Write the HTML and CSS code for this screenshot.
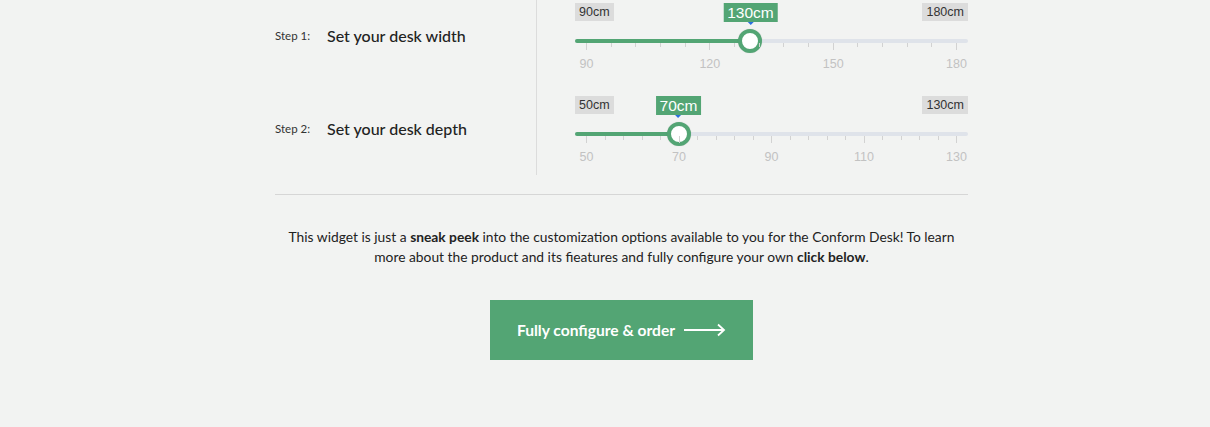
FILE: index.html
```html
<!DOCTYPE html>
<html lang="en">
<head>
<meta charset="utf-8">
<title>Desk configurator</title>
<link rel="stylesheet" href="styles.css">
</head>
<body>
<div class="widget">
  <div class="steps">
    <div class="step">
      <div class="step-label"><span class="step-num">Step 1:</span><span class="step-title">Set your desk width</span></div>
      <div class="step-control">
        <div class="slider">
          <span class="edge edge-min">90cm</span>
          <span class="edge edge-max">180cm</span>
          <div class="track"></div>
          <div class="bar" style="width:175px"></div>
          <div class="handle" style="left:163px"></div>
          <span class="tip" style="left:175.5px">130cm</span>
          <div class="ticks">
            <i class="big"></i><i></i><i></i><i></i><i></i>
            <i class="big"></i><i></i><i></i><i></i><i></i>
            <i class="big"></i><i></i><i></i><i></i><i></i>
            <i class="big"></i>
          </div>
          <div class="nums"><span>90</span><span>120</span><span>150</span><span>180</span></div>
        </div>
      </div>
    </div>
    <div class="step step-last">
      <div class="step-label"><span class="step-num">Step 2:</span><span class="step-title">Set your desk depth</span></div>
      <div class="step-control">
        <div class="slider">
          <span class="edge edge-min">50cm</span>
          <span class="edge edge-max">130cm</span>
          <div class="track"></div>
          <div class="bar" style="width:103px"></div>
          <div class="handle" style="left:91.5px"></div>
          <span class="tip" style="left:103.5px">70cm</span>
          <div class="ticks">
            <i class="big"></i><i></i><i></i><i></i><i></i>
            <i class="big"></i><i></i><i></i><i></i><i></i>
            <i class="big"></i><i></i><i></i><i></i><i></i>
            <i class="big"></i><i></i><i></i><i></i><i></i>
            <i class="big"></i>
          </div>
          <div class="nums"><span>50</span><span>70</span><span>90</span><span>110</span><span>130</span></div>
        </div>
      </div>
    </div>
  </div>
  <hr class="divider">
  <p class="note">This widget is just a <b>sneak peek</b> into the customization options available to you for the Conform Desk! To learn more about the product and its fieatures and fully configure your own <b>click below</b>.</p>
  <div class="cta-wrap">
    <a class="cta" href="#"><span>Fully configure &amp; order</span>
      <svg class="arrow" width="42" height="14" viewBox="0 0 42 14" aria-hidden="true"><path d="M0 7H40M34 1.5L40 7L34 12.5" fill="none" stroke="#fff" stroke-width="1.8"/></svg>
    </a>
  </div>
</div>
</body>
</html>
```
FILE: styles.css
```css
html, body {
  margin: 0;
  padding: 0;
}
body {
  background: #f2f3f2;
  font-family: Lato, "Open Sans", sans-serif;
  color: #222;
}
.widget {
  margin-left: 275px;
  width: 693px;
}
.steps {
  display: flex;
  flex-direction: column;
}
.step {
  display: flex;
  height: 93px;
}
.step-last {
  height: 82px;
}
.step-label {
  width: 261px;
  margin-top: 25px;
  display: flex;
  align-items: center;
  height: 20px;
}
.step-num {
  font-size: 11.5px;
  color: #333;
  width: 52px;
}
.step-title {
  font-size: 16px;
  font-weight: 500;
  color: #222;
}
.step-control {
  flex: 1;
  border-left: 1px solid #dcdcdc;
  padding-left: 38px;
}
.slider {
  position: relative;
  width: 393px;
  height: 82px;
  font-family: "Liberation Sans", Arial, sans-serif;
}
.edge {
  position: absolute;
  top: 3px;
  height: 18px;
  line-height: 18px;
  padding: 0 4px;
  font-size: 12.5px;
  color: #333;
  background: #dcdcdc;
}
.edge-min { left: 0; }
.edge-max { right: 0; }
.track {
  position: absolute;
  top: 39px;
  left: 0;
  right: 0;
  height: 4px;
  border-radius: 2px;
  background: #dfe3ea;
}
.bar {
  position: absolute;
  top: 39px;
  left: 0;
  height: 4px;
  border-radius: 2px 0 0 2px;
  background: #53a574;
}
.handle {
  position: absolute;
  top: 29px;
  width: 24px;
  height: 24px;
  box-sizing: border-box;
  border: 4px solid #53a574;
  border-radius: 50%;
  background: #fff;
  box-shadow: 0 0 1px rgba(0,0,0,0.2);
}
.tip {
  position: absolute;
  top: 3px;
  transform: translateX(-50%);
  height: 19px;
  line-height: 19px;
  padding: 0 4px;
  font-size: 15.5px;
  color: #fff;
  background: #53a574;
  white-space: nowrap;
}
.tip::after {
  content: "";
  position: absolute;
  left: 50%;
  bottom: -3px;
  margin-left: -3px;
  border-left: 3px solid transparent;
  border-right: 3px solid transparent;
  border-top: 3px solid #2a6fe0;
}
.ticks {
  position: absolute;
  top: 43px;
  left: 11px;
  width: 371px;
  display: flex;
  justify-content: space-between;
}
.ticks i {
  display: block;
  width: 1px;
  height: 4px;
  background: #d2d2d2;
}
.ticks i.big {
  height: 7px;
}
.nums {
  position: absolute;
  top: 56px;
  left: 11px;
  width: 371px;
  display: flex;
  justify-content: space-between;
  font-size: 12.5px;
  line-height: 16px;
  color: #c2c2c2;
}
.nums span {
  width: 1px;
  display: flex;
  justify-content: center;
}
.divider {
  margin: 19px 0 0;
  border: 0;
  height: 1px;
  background: #d6d6d6;
}
.note {
  margin: 32px 0 0;
  font-size: 13.8px;
  line-height: 20px;
  text-align: center;
  color: #222;
}
.note b {
  font-weight: 700;
}
.cta-wrap {
  display: flex;
  justify-content: center;
  margin-top: 33px;
}
.cta {
  display: flex;
  align-items: center;
  justify-content: center;
  gap: 9px;
  width: 263px;
  height: 60px;
  background: #53a574;
  color: #fff;
  font-size: 15.6px;
  font-weight: 700;
  text-decoration: none;
}
.arrow {
  display: block;
}
```
